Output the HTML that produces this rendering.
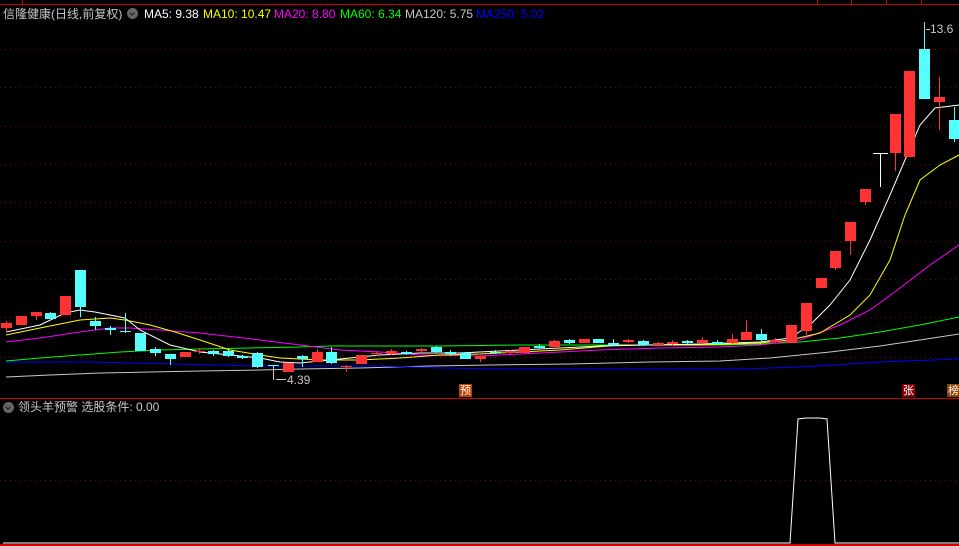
<!DOCTYPE html>
<html><head><meta charset="utf-8"><style>
html,body{margin:0;padding:0;background:#000;width:959px;height:546px;overflow:hidden;position:relative;font-family:"Liberation Sans","Noto Sans CJK SC",sans-serif}
.t{position:absolute;font-size:12px;line-height:14px;white-space:nowrap}
.ic{position:absolute;width:11px;height:11px;border-radius:50%;background:#666}
.ic:after{content:"";position:absolute;left:3px;top:3px;width:3px;height:3px;border-right:1.5px solid #222;border-bottom:1.5px solid #222;transform:rotate(45deg)}
.bx{position:absolute;width:13px;height:13px;font-size:11px;line-height:13px;text-align:center;color:#fff;font-family:"Noto Sans CJK SC",sans-serif}
</style></head><body>
<svg id="s" width="959" height="546" style="position:absolute;left:0;top:0" xmlns="http://www.w3.org/2000/svg"></svg>
<div class="t" style="left:3px;top:7px;color:#c8c8c8">信隆健康(日线,前复权)</div>
<div class="ic" style="left:127px;top:8px"></div>
<div class="t" style="left:144px;top:7px;color:#fff">MA5: 9.38</div>
<div class="t" style="left:203px;top:7px;color:#ff0">MA10: 10.47</div>
<div class="t" style="left:274px;top:7px;color:#f0f">MA20: 8.80</div>
<div class="t" style="left:340px;top:7px;color:#0f0">MA60: 6.34</div>
<div class="t" style="left:405px;top:7px;color:#c8c8c8">MA120: 5.75</div>
<div class="t" style="left:476px;top:7px;color:#00f">MA250: 5.02</div>
<div class="t" style="left:287px;top:373px;color:#c8c8c8">4.39</div>
<div class="t" style="left:930px;top:22px;color:#c8c8c8">13.6</div>
<div class="bx" style="left:459px;top:384px;background:#c04000">预</div>
<div class="bx" style="left:902px;top:384px;background:#8b0000">张</div>
<div class="bx" style="left:947px;top:384px;background:#8b4000">榜</div>
<div class="ic" style="left:3px;top:402px"></div>
<div class="t" style="left:18px;top:400px;color:#c8c8c8">领头羊预警 选股条件: 0.00</div>
<script>
var s=document.getElementById('s'),h='';
function L(x1,y1,x2,y2,c,w,d){h+='<line x1="'+x1+'" y1="'+y1+'" x2="'+x2+'" y2="'+y2+'" stroke="'+c+'" stroke-width="'+(w||1)+'"'+(d?' stroke-dasharray="'+d+'"':'')+'/>';}
L(0,4.5,959,4.5,'#c00');[22,817,851,886,921].forEach(function(x){L(x+.5,0,x+.5,4,'#c00');});
[49,87,126,164,202,241,279,317,357].forEach(function(y){L(0,y+.5,959,y+.5,'#8a0000',1,'1 4');});
L(0,398.5,959,398.5,'#c00');L(0,480.5,959,480.5,'#8a0000',1,'1 4');L(0,545,959,545,'#c00',2);
function P(pts,c){h+='<polyline fill="none" stroke="'+c+'" stroke-width="1" points="'+pts+'"/>';}
P('6,377 50,375 100,373 150,372 200,371 260,370 300,369 360,368 430,366 490,365 570,364 650,362 720,361 770,358 830,352 880,346 920,340 959,334','#c8c8c8');
P('6,362 90,362 177,364 260,366 380,366 443,368 500,369 740,369 800,367 880,362 959,359','#00f');
P('6,361 40,358 80,355 120,352 160,350 200,349 250,348 300,347 330,346 440,346 520,345 580,345 720,345 760,344 800,342 840,338 880,332 920,325 959,317','#0f0');
P('6,342 40,338 80,332 110,328 130,328 160,330 200,333 260,340 300,345 340,350 380,352 420,355 480,356 540,353 600,350 660,348 720,347 760,345 800,340 840,325 870,310 900,288 930,265 959,245','#f0f');
P('6,335 40,328 80,320 110,318 125,320 150,325 175,332 200,340 230,350 260,355 280,358 320,360 360,360 400,358 440,355 480,354 520,352 560,350 620,345 700,345 760,343 790,340 820,333 850,315 870,295 890,260 905,215 920,180 940,165 959,155','#ff0');
P('6,332 40,325 65,313 80,310 95,312 125,318 140,330 170,345 200,352 230,355 260,358 280,362 300,363 330,360 380,355 420,353 460,353 520,350 600,346 700,344 760,342 790,338 810,325 830,305 850,280 870,240 890,195 905,160 920,125 935,108 959,105','#fff');
var R='#ff3333',C='#55ffff';
var k=[[6,323,328,321,332,R],[21,316,325,316,325,R],[36,312,316,312,320,R],[50,313,319,312,319,C],[65,296,315,296,315,R],[80,270,307,270,317,C],[95,321,326,317,330,C],[110,328,330,326,335,C],[125,331,332,313,333,C],[140,333,351,333,351,C],[155,349,353,347,356,C],[170,354,359,354,365,C],[185,352,357,352,357,R],[199,351,352,348,354,R],[213,351,354,350,356,C],[228,351,356,350,357,C],[242,356,358,355,359,C],[257,353,367,352,368,C],[273,365,366,366,380,C],[288,363,372,363,372,R],[302,356,359,355,367,C],[317,352,362,349,362,R],[331,352,363,347,364,C],[346,366,367,365,372,R],[361,355,364,355,364,R],[376,353,354,351,356,R],[391,351,354,349,355,R],[406,352,354,351,355,C],[421,349,351,348,352,R],[436,347,352,346,353,C],[450,352,354,350,356,C],[465,353,359,352,359,C],[480,356,359,356,362,R],[495,352,353,350,354,C],[510,351,353,350,354,R],[524,347,353,347,353,R],[539,346,348,344,349,C],[554,341,347,340,347,R],[569,340,343,339,344,C],[584,339,343,339,343,R],[598,339,343,339,343,C],[613,343,345,339,346,C],[628,340,342,339,343,R],[643,341,345,340,346,C],[658,343,345,342,346,R],[672,342,344,340,345,R],[687,341,343,340,344,C],[702,340,343,337,344,R],[717,342,344,340,345,C],[732,339,343,334,344,R],[746,332,340,320,340,R],[761,334,340,329,341,C],[775,340,342,338,343,R],[791,325,343,325,343,R],[806,303,331,303,335,R],[821,278,288,278,288,R],[835,251,268,251,270,R],[850,222,241,222,255,R],[865,189,202,189,205,R],[880,153,154,153,187,'#fff'],[895,114,153,114,171,R],[909,71,157,71,157,R],[924,49,99,25,99,C],[939,97,102,77,130,R],[954,120,139,107,142,C]];
k.forEach(function(a){var x=a[0];L(x+.5,a[3],x+.5,a[4],a[5]);h+='<rect x="'+(x-5)+'" y="'+a[1]+'" width="11" height="'+Math.max(1,a[2]-a[1])+'" fill="'+a[5]+'"/>';});
L(873,153.5,888,153.5,'#fff');L(880.5,153,880.5,187,'#fff');
L(273.5,366,273.5,380,'#c8c8c8');L(276,379.5,286,379.5,'#c8c8c8');
L(924.5,22,924.5,30,'#c8c8c8');L(926,29.5,930,29.5,'#c8c8c8');
P('3,543 790,543 798,419 806,418 820,418 827,419 835,543 959,543','#fff');
s.innerHTML=h;
</script>
</body></html>
